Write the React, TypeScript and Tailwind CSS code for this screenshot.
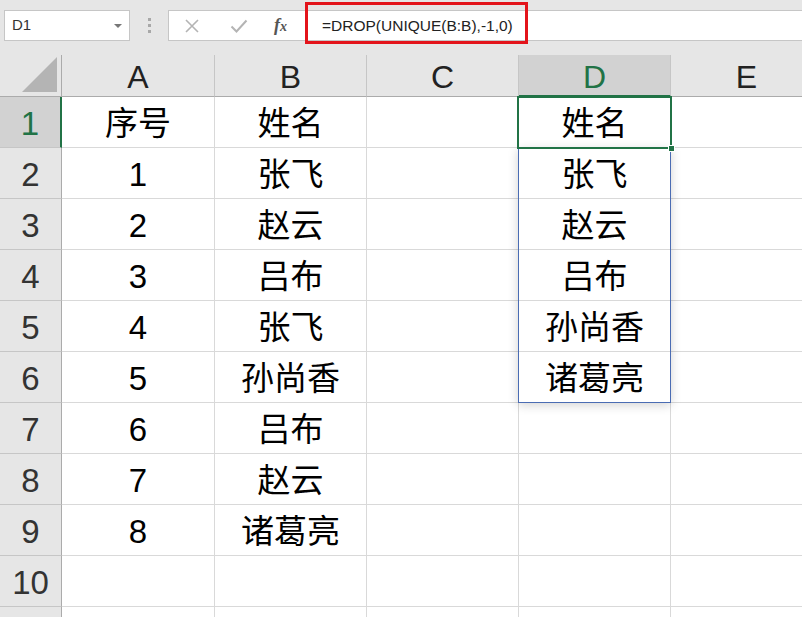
import React from "react";

const cols = ["A", "B", "C", "D", "E"];

// 表格数据（A、B 两列），D 列为 DROP(UNIQUE(B:B),-1,0) 的溢出结果
const dataA = ["序号", "1", "2", "3", "4", "5", "6", "7", "8", "", ""];
const dataB = ["姓名", "张飞", "赵云", "吕布", "张飞", "孙尚香", "吕布", "赵云", "诸葛亮", "", ""];
const dataD = ["姓名", "张飞", "赵云", "吕布", "孙尚香", "诸葛亮", "", "", "", "", ""];

const cellFont = { fontFamily: '"Liberation Sans", "Noto Sans CJK SC", sans-serif' };

const App: React.FC = () => {
    return (
        <div className="w-[802px] h-[617px] overflow-hidden bg-[#e6e6e6] text-black" style={cellFont}>
            {/* 编辑栏 */}
            <div className="relative h-[55px] flex items-start pt-[10px]">
                <div className="ml-[4px] w-[126px] h-[31px] bg-white border border-[#c6c6c6] flex items-center justify-between px-[7px]">
                    <span className="text-[15px] text-[#333]">D1</span>
                    <span className="w-0 h-0 border-l-[4px] border-r-[4px] border-t-[4px] border-l-transparent border-r-transparent border-t-[#777]" />
                </div>
                <div className="w-[38px] h-[31px] flex flex-col items-center justify-center gap-[3px]">
                    <span className="w-[3px] h-[3px] bg-[#a8a8a8]" />
                    <span className="w-[3px] h-[3px] bg-[#a8a8a8]" />
                    <span className="w-[3px] h-[3px] bg-[#a8a8a8]" />
                </div>
                <div className="flex-1 h-[31px] bg-white border border-[#c6c6c6] border-r-0 flex items-center">
                    <svg className="ml-[15px]" width="16" height="16" viewBox="0 0 16 16">
                        <path d="M2 2 L14 14 M14 2 L2 14" stroke="#b4b4b4" strokeWidth="1.6" fill="none" />
                    </svg>
                    <svg className="ml-[30px]" width="18" height="16" viewBox="0 0 18 16">
                        <path d="M1.5 8.5 L6.5 13.5 L16.5 2.5" stroke="#b4b4b4" strokeWidth="2" fill="none" />
                    </svg>
                    <span className="ml-[26px] text-[18px] italic font-bold text-[#555]" style={{ fontFamily: '"Liberation Serif", serif' }}>
                        f<span className="text-[14px]">x</span>
                    </span>
                    <span className="ml-[35px] text-[15.5px] text-[#222]">=DROP(UNIQUE(B:B),-1,0)</span>
                </div>
                {/* 红色标注框 */}
                <div className="absolute left-[305px] top-[2px] w-[223px] h-[42px] border-[3px] border-[#e3141b]" />
            </div>

            {/* 工作表 */}
            <div className="relative">
                <div className="grid grid-cols-[62px_153px_152px_152px_152px_152px] grid-rows-[42px_repeat(11,51px)] w-[823px]">
                    {/* 角落 */}
                    <div className="bg-[#e6e6e6] border-r border-b border-[#ababab] flex items-end justify-end pr-[4px] pb-[4px]">
                        <svg width="35" height="35" viewBox="0 0 35 35">
                            <path d="M35 0 L35 35 L0 35 Z" fill="#b4b4b4" />
                        </svg>
                    </div>
                    {/* 列标题 */}
                    {cols.map((c) => (
                        <div
                            key={c}
                            className={
                                c === "D"
                                    ? "bg-[#d2d2d2] border-r border-[#c6c6c6] border-b-2 border-b-[#217346] flex items-center justify-center text-[32px] text-[#217346] pt-[3px]"
                                    : "bg-[#e6e6e6] border-r border-[#c6c6c6] border-b border-b-[#ababab] flex items-center justify-center text-[32px] text-[#222] pt-[3px]"
                            }
                        >
                            {c}
                        </div>
                    ))}

                    {dataA.map((a, i) => (
                        <React.Fragment key={i}>
                            <div
                                className={
                                    i === 0
                                        ? "bg-[#d2d2d2] border-b border-[#c6c6c6] border-r-2 border-r-[#217346] flex items-center justify-center text-[33px] text-[#217346] pt-[3px]"
                                        : "bg-[#e6e6e6] border-b border-[#c6c6c6] border-r border-r-[#ababab] flex items-center justify-center text-[33px] text-[#333] pt-[3px]"
                                }
                            >
                                {i < 10 ? i + 1 : ""}
                            </div>
                            <div className="bg-white border-r border-b border-[#d9d9d9] flex items-center justify-center text-[33px] pt-[3px]">{a}</div>
                            <div className="bg-white border-r border-b border-[#d9d9d9] flex items-center justify-center text-[33px] pt-[3px]">{dataB[i]}</div>
                            <div className="bg-white border-r border-b border-[#d9d9d9]" />
                            <div className="bg-white border-r border-b border-[#d9d9d9] flex items-center justify-center text-[33px] pt-[3px]">{dataD[i]}</div>
                            <div className="bg-white border-r border-b border-[#d9d9d9]" />
                        </React.Fragment>
                    ))}
                </div>

                {/* 溢出区域 */}
                <div className="absolute left-[518px] top-[93px] w-[153px] h-[255px] border border-[#4a6cb3] shadow-[0_2px_10px_rgba(0,0,0,0.18)] pointer-events-none" />
                {/* 活动单元格 */}
                <div className="absolute left-[517px] top-[41px] w-[155px] h-[53px] border-2 border-[#217346] pointer-events-none">
                    <div className="absolute -right-[5px] -bottom-[5px] w-[7px] h-[7px] bg-[#217346] border border-white" />
                </div>
            </div>
        </div>
    );
};

export default App;
